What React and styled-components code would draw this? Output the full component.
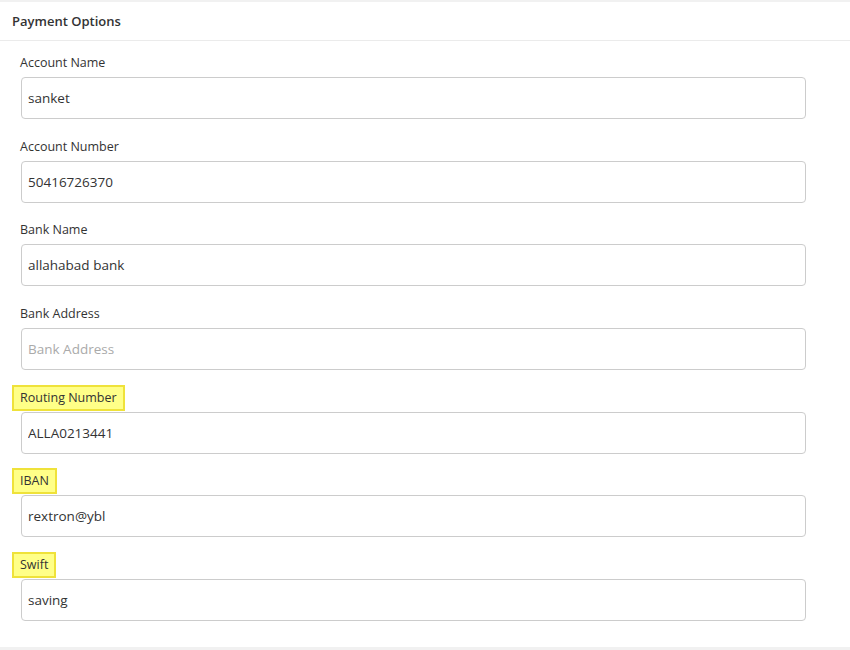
import React from "react";
import styled, { createGlobalStyle } from "styled-components";

const GlobalStyle = createGlobalStyle`
  html, body {
    margin: 0;
    padding: 0;
    background: #f1f1f1;
    font-family: "Open Sans", "Noto Sans", sans-serif;
  }
`;

const Page = styled.div`
  width: 850px;
  height: 650px;
  padding-top: 2px;
  box-sizing: border-box;
  background: #f1f1f1;
`;

const Card = styled.section`
  background: #fff;
  height: 645px;
`;

const CardHeader = styled.header`
  height: 38px;
  display: flex;
  align-items: center;
  padding: 0 12px;
  border-bottom: 1px solid #ebebeb;
  font-size: 13px;
  font-weight: 600;
  color: #333;
`;

const CardBody = styled.div`
  padding: 12px 44px 0 20px;
`;

const Field = styled.div`
  display: flex;
  flex-direction: column;
  align-items: flex-start;
  margin-bottom: 17.67px;
`;

const Label = styled.label`
  font-size: 12.5px;
  line-height: 20px;
  color: #333;
  margin-bottom: 4px;
  ${({ $marked }) =>
    $marked &&
    `
    background: #ffff88;
    border: 2px solid #efe23a;
    padding: 1px 6px;
    margin-left: -8px;
    margin-top: -3px;
    margin-bottom: 1px;
  `}
`;

const Input = styled.input`
  width: calc(100% - 1px);
  margin-left: 1px;
  height: 42px;
  box-sizing: border-box;
  border: 1px solid #cccccc;
  border-radius: 4px;
  padding: 0 6px;
  font-family: inherit;
  font-size: 13.5px;
  color: #333;
  outline: none;

  &::placeholder {
    color: #aaa;
  }
`;

const fields = [
  { label: "Account Name", value: "sanket" },
  { label: "Account Number", value: "50416726370" },
  { label: "Bank Name", value: "allahabad bank" },
  { label: "Bank Address", value: "", placeholder: "Bank Address" },
  { label: "Routing Number", value: "ALLA0213441", marked: true },
  { label: "IBAN", value: "rextron@ybl", marked: true },
  { label: "Swift", value: "saving", marked: true },
];

const App = () => {
  return (
    <Page>
      <GlobalStyle />
      <Card>
        <CardHeader>Payment Options</CardHeader>
        <CardBody>
          {fields.map((f) => (
            <Field key={f.label}>
              <Label $marked={f.marked}>{f.label}</Label>
              <Input
                defaultValue={f.value}
                placeholder={f.placeholder}
                readOnly
              />
            </Field>
          ))}
        </CardBody>
      </Card>
    </Page>
  );
};

export default App;
